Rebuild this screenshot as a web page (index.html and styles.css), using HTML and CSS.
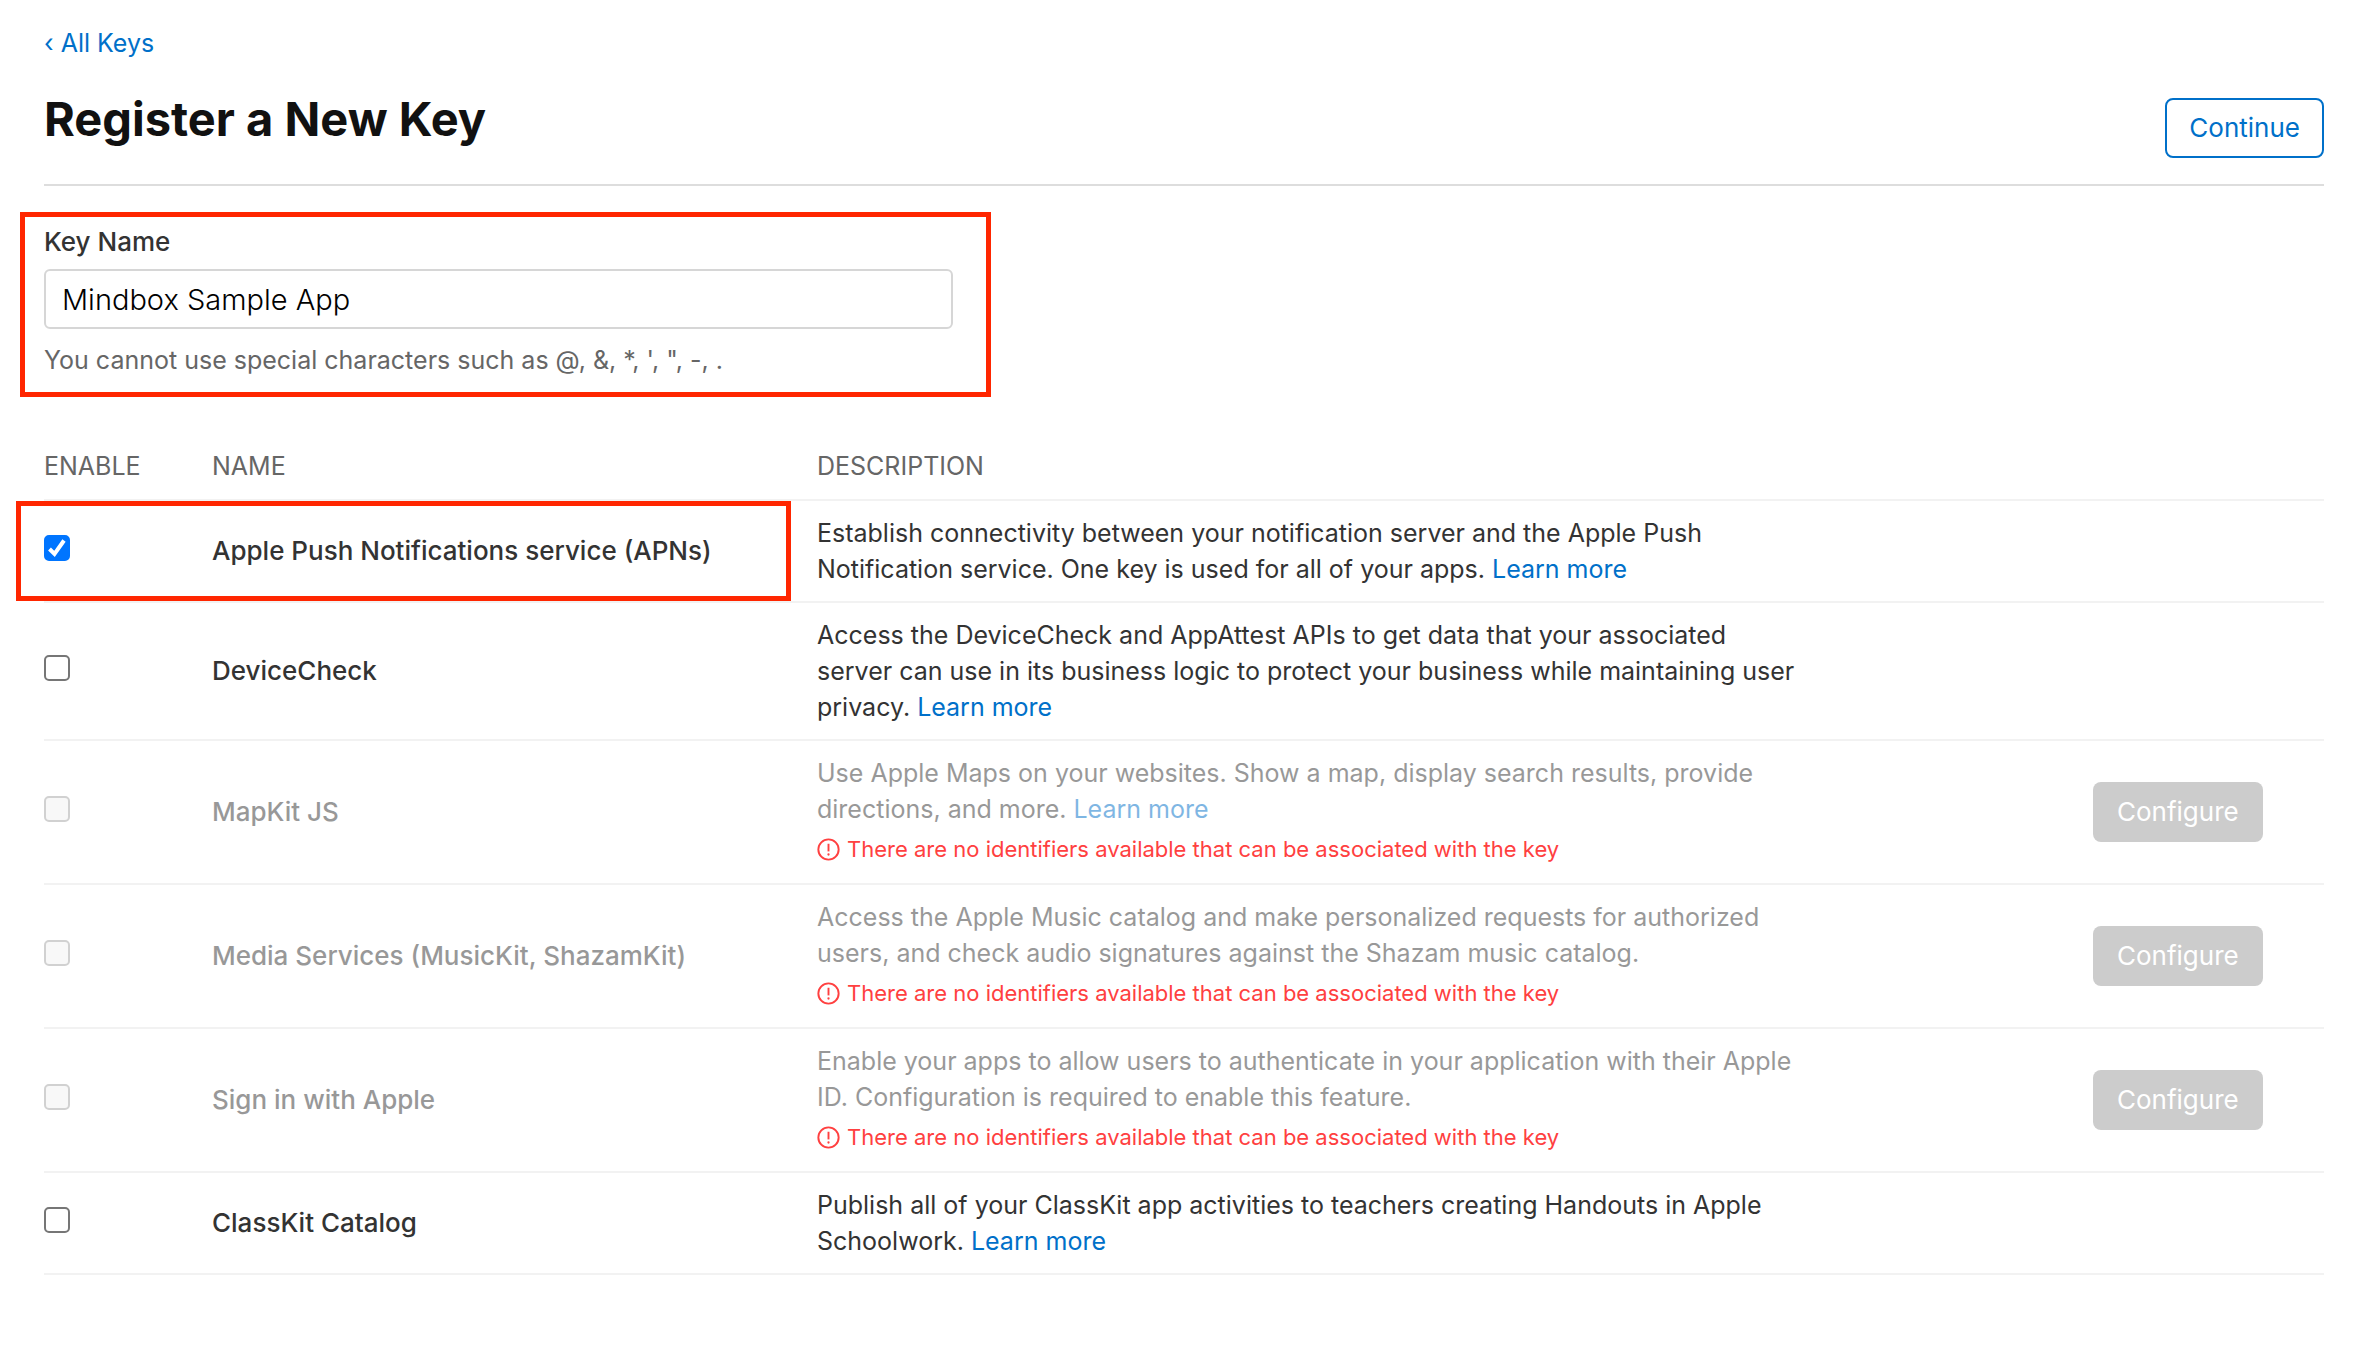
FILE: index.html
```html
<!DOCTYPE html>
<html lang="en">
<head>
    <meta charset="UTF-8">
    <meta name="viewport" content="width=device-width, initial-scale=1.0">
    <title>Register a New Key</title>
    <link rel="stylesheet" href="styles.css">
</head>
<body>
    <a href="#" class="back">‹ All Keys</a>
    <header class="header">
        <h1>Register a New Key</h1>
        <button type="button" class="btn continue-btn">Continue</button>
    </header>

    <div class="key-name">
        <label for="keyName">Key Name</label>
        <input type="text" id="keyName" name="keyName" value="Mindbox Sample App" aria-describedby="keyHint">
        <p id="keyHint">You cannot use special characters such as @, &amp;, *, ', ", -, .</p>
    </div>

    <table class="services">
        <thead>
            <tr>
                <th class="col-enable">ENABLE</th>
                <th class="col-name">NAME</th>
                <th class="col-desc">DESCRIPTION</th>
                <th class="col-action"></th>
            </tr>
        </thead>
        <tbody>
            <tr class="selected">
                <td><input type="checkbox" id="apns" checked></td>
                <td><label for="apns">Apple Push Notifications service (APNs)</label></td>
                <td><p class="desc">Establish connectivity between your notification server and the Apple Push Notification service. One key is used for all of your apps. <a href="#">Learn more</a></p></td>
                <td></td>
            </tr>
            <tr>
                <td><input type="checkbox" id="devicecheck"></td>
                <td><label for="devicecheck">DeviceCheck</label></td>
                <td><p class="desc">Access the DeviceCheck and AppAttest APIs to get data that your associated server can use in its business logic to protect your business while maintaining user privacy. <a href="#">Learn more</a></p></td>
                <td></td>
            </tr>
            <tr class="disabled">
                <td><input type="checkbox" id="mapkit" disabled></td>
                <td><label for="mapkit">MapKit JS</label></td>
                <td>
                    <p class="desc">Use Apple Maps on your websites. Show a map, display search results, provide directions, and more. <a href="#">Learn more</a></p>
                    <p class="error"><svg viewBox="0 0 24 24" aria-hidden="true"><circle cx="12" cy="12" r="10.6"/><path d="M12 6v8"/><circle class="dot" cx="12" cy="17.2" r="1.2"/></svg>There are no identifiers available that can be associated with the key</p>
                </td>
                <td><button type="button" class="btn configure-btn" disabled>Configure</button></td>
            </tr>
            <tr class="disabled">
                <td><input type="checkbox" id="media" disabled></td>
                <td><label for="media">Media Services (MusicKit, ShazamKit)</label></td>
                <td>
                    <p class="desc">Access the Apple Music catalog and make personalized requests for authorized users, and check audio signatures against the Shazam music catalog.</p>
                    <p class="error"><svg viewBox="0 0 24 24" aria-hidden="true"><circle cx="12" cy="12" r="10.6"/><path d="M12 6v8"/><circle class="dot" cx="12" cy="17.2" r="1.2"/></svg>There are no identifiers available that can be associated with the key</p>
                </td>
                <td><button type="button" class="btn configure-btn" disabled>Configure</button></td>
            </tr>
            <tr class="disabled">
                <td><input type="checkbox" id="signin" disabled></td>
                <td><label for="signin">Sign in with Apple</label></td>
                <td>
                    <p class="desc">Enable your apps to allow users to authenticate in your application with their Apple ID. Configuration is required to enable this feature.</p>
                    <p class="error"><svg viewBox="0 0 24 24" aria-hidden="true"><circle cx="12" cy="12" r="10.6"/><path d="M12 6v8"/><circle class="dot" cx="12" cy="17.2" r="1.2"/></svg>There are no identifiers available that can be associated with the key</p>
                </td>
                <td><button type="button" class="btn configure-btn" disabled>Configure</button></td>
            </tr>
            <tr>
                <td><input type="checkbox" id="classkit"></td>
                <td><label for="classkit">ClassKit Catalog</label></td>
                <td><p class="desc">Publish all of your ClassKit app activities to teachers creating Handouts in Apple Schoolwork. <a href="#">Learn more</a></p></td>
                <td></td>
            </tr>
        </tbody>
    </table>
</body>
</html>
```

FILE: styles.css
```css
*, *::after {
    box-sizing: border-box;
}
body {
    margin: 0;
    padding: 25px 38px 0 44px;
    background-color: #fff;
    color: #333;
    font-family: Inter, "Liberation Sans", sans-serif;
    font-size: 25px;
    line-height: 36px;
}
a {
    color: #0070c9;
    text-decoration: none;
}
a:hover {
    text-decoration: underline;
}
h1, p {
    margin: 0;
}
.back {
    display: block;
}

/* title bar */
.header {
    display: flex;
    justify-content: space-between;
    align-items: flex-start;
    padding: 29px 0 26px;
    border-bottom: 2px solid #ddd;
}
h1 {
    color: #111;
    font-size: 47px;
    font-weight: 700;
    line-height: 58px;
}
.btn {
    height: 60px;
    border-radius: 8px;
    font-family: inherit;
    font-size: 26px;
    white-space: nowrap;
}
.continue-btn {
    margin-top: 8px;
    padding: 0 22px 2px;
    border: 2px solid #0070c9;
    background-color: #fff;
    color: #0070c9;
}
.configure-btn {
    padding: 0 24px 2px;
    border: 0;
    background-color: #ccc;
    color: #fff;
}

/* key name field */
.key-name {
    width: 42.6%;
    margin: 26px 0 0 -24px;
    padding: 7px 33px 14px 19px;
    border: 5px solid #ff2600;
}
.key-name label {
    display: block;
    margin-bottom: 9px;
    font-size: 26px;
    font-weight: 500;
}
.key-name input {
    display: block;
    width: 100%;
    height: 60px;
    padding: 0 16px;
    border: 2px solid #d6d6d6;
    border-radius: 6px;
    color: #000;
    font-family: inherit;
    font-size: 29px;
    font-weight: 300;
}
.key-name p {
    margin-top: 13px;
    color: #666;
}

/* services table */
.services {
    width: 100%;
    margin-top: 42px;
    border-collapse: separate;
    border-spacing: 0;
    table-layout: fixed;
}
.services th {
    padding: 9px 0 15px;
    border-bottom: 2px solid #f2f2f2;
    color: #666;
    font-weight: 400;
    text-align: left;
}
.services td {
    padding: 14px 0;
    border-bottom: 2px solid #f2f2f2;
    vertical-align: middle;
}
.col-enable {
    width: 168px;
}
.col-name {
    width: 605px;
}
.col-action {
    width: 231px;
}
.services label {
    font-size: 26px;
    font-weight: 500;
}
.services input {
    appearance: none;
    display: block;
    width: 26px;
    height: 26px;
    margin: 0 0 6px;
    border: 2px solid #767676;
    border-radius: 5px;
    background-color: #fff;
}
.services input:checked {
    border-color: #0075ff;
    background: #0075ff url("data:image/svg+xml,%3Csvg xmlns='http://www.w3.org/2000/svg' viewBox='0 0 22 22'%3E%3Cpath d='M3.5 12l5 5L18 3.5' fill='none' stroke='white' stroke-width='4'/%3E%3C/svg%3E") center no-repeat;
}
.services input:disabled {
    border-color: #d1d1d1;
    background-color: #f8f8f8;
}
.desc {
    max-width: 986px;
}
.disabled label, .disabled .desc {
    opacity: 0.5;
}
.error {
    display: flex;
    align-items: center;
    gap: 7px;
    padding: 4px 0 2px;
    color: #ff4040;
    font-size: 22px;
}
.error svg {
    width: 23px;
    height: 23px;
    fill: none;
    stroke: #ff4040;
    stroke-width: 2;
}
.error .dot {
    fill: #ff4040;
    stroke: none;
}

/* frame round the enabled service */
.selected {
    position: relative;
}
.selected td:first-child::after {
    content: "";
    position: absolute;
    top: 0;
    left: -28px;
    width: 775px;
    height: calc(100% - 2px);
    border: 5px solid #ff2600;
    pointer-events: none;
}
```
